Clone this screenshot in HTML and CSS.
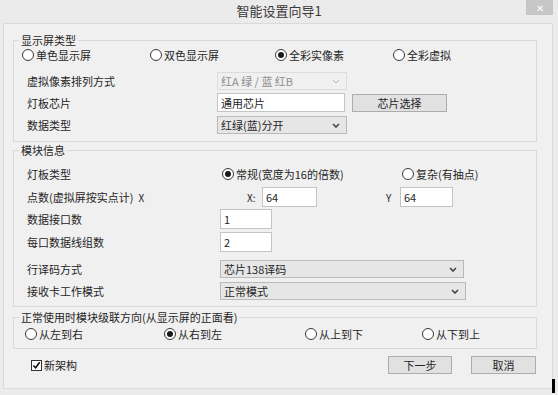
FILE: index.html
```html
<!DOCTYPE html>
<html>
  <head>
    <title>智能设置向导1</title>
    <link rel="stylesheet" href="styles.css">
  </head>
  <body>

	<div class="titlebar">
		<span></span>
		<span class="title">智能设置向导1</span>
		<span class="close">✕</span>
	</div>

	<div class="panel">

		<fieldset class="group g1">
			<legend>显示屏类型</legend>
			<div class="radios">
				<label class="radio"><i></i>单色显示屏</label>
				<label class="radio"><i></i>双色显示屏</label>
				<label class="radio on"><i></i>全彩实像素</label>
				<label class="radio"><i></i>全彩虚拟</label>
			</div>
			<div class="row r-arrange">
				<span class="lbl">虚拟像素排列方式</span>
				<div class="select disabled" style="width: 130px;">红A 绿 / 蓝 红B<svg viewBox="0 0 8 5"><path d="M1 1 L4 4 L7 1"/></svg></div>
			</div>
			<div class="row r-chip">
				<span class="lbl">灯板芯片</span>
				<input class="text" style="width: 128px;" value="通用芯片">
				<button class="btn chipbtn">芯片选择</button>
			</div>
			<div class="row r-data">
				<span class="lbl">数据类型</span>
				<div class="select" style="width: 130px;">红绿(蓝)分开<svg viewBox="0 0 8 5"><path d="M1 1 L4 4 L7 1"/></svg></div>
			</div>
		</fieldset>

		<fieldset class="group g2">
			<legend>模块信息</legend>
			<div class="row r-board">
				<span class="lbl">灯板类型</span>
				<label class="radio on wide"><i></i>常规(宽度为16的倍数)</label>
				<label class="radio"><i></i>复杂(有抽点)</label>
			</div>
			<div class="row r-dots">
				<span class="lbl dots">点数(虚拟屏按实点计)&nbsp;&nbsp;<small>X</small></span>
				<span class="axis"><small>X:</small></span>
				<input class="text" style="width: 55px;" value="64">
				<span class="axis ay"><small>Y</small></span>
				<input class="text" style="width: 53px;" value="64">
			</div>
			<div class="row r-ports">
				<span class="lbl short">数据接口数</span>
				<input class="text" style="width: 52px;" value="1">
			</div>
			<div class="row r-lines">
				<span class="lbl short">每口数据线组数</span>
				<input class="text" style="width: 52px;" value="2">
			</div>
			<div class="row r-decode">
				<span class="lbl short">行译码方式</span>
				<div class="select" style="width: 244px;">芯片138译码<svg viewBox="0 0 8 5"><path d="M1 1 L4 4 L7 1"/></svg></div>
			</div>
			<div class="row r-mode">
				<span class="lbl short">接收卡工作模式</span>
				<div class="select" style="width: 246px;">正常模式<svg viewBox="0 0 8 5"><path d="M1 1 L4 4 L7 1"/></svg></div>
			</div>
		</fieldset>

		<fieldset class="group g3">
			<legend>正常使用时模块级联方向(从显示屏的正面看)</legend>
			<div class="radios">
				<label class="radio"><i></i>从左到右</label>
				<label class="radio on"><i></i>从右到左</label>
				<label class="radio"><i></i>从上到下</label>
				<label class="radio"><i></i>从下到上</label>
			</div>
		</fieldset>

		<div class="footer">
			<label class="check"><i><svg viewBox="0 0 10 10"><path d="M1.5 5 L4 7.5 L8.5 1.5"/></svg></i>新架构</label>
			<div class="buttons">
				<button class="btn">下一步</button>
				<button class="btn">取消</button>
			</div>
		</div>

	</div>

	<div class="cursor"></div>

  </body>
</html>
```

FILE: styles.css
```css
body { margin: 0; width: 558px; height: 395px; background: #ebebeb; font-family: "Noto Sans CJK SC", "Microsoft YaHei", sans-serif; font-size: 11px; color: #262626; position: relative; overflow: hidden; }
small { font-size: 10px; }

.titlebar { display: grid; grid-template-columns: 1fr auto 1fr; height: 23px; }
.titlebar .title { font-size: 13px; line-height: 22px; color: #3a3a3a; }
.titlebar .close { justify-self: end; width: 27px; height: 15px; margin-right: 5px; background: #c6c6c6; color: #fff; font-size: 10px; line-height: 15px; text-align: center; }

.panel { width: 548px; height: 364px; margin-left: 3px; background: #f0f0f0; border: 1px solid #dadada; }

.group { margin: 0 15px 0 9px; padding: 0; border: 1px solid #d9d9d9; border-radius: 0; min-width: 0; }
.group legend { margin-left: 5px; padding: 0 2px; line-height: 14px; }
.g1 { margin-top: 9px; padding-bottom: 7px; }
.g2 { margin-top: 1px; padding-bottom: 6px; }
.g3 { margin-top: 3px; padding-bottom: 7px; }

.radios { display: grid; height: 14px; align-items: center; }
.g1 .radios { grid-template-columns: 128px 125px 118px auto; margin: 1px 0 0 8px; }
.g3 .radios { grid-template-columns: 139px 141px 117px auto; margin: 3px 0 0 11px; }

.radio { display: flex; align-items: center; gap: 2px; line-height: 14px; white-space: nowrap; }
.radio i { box-sizing: border-box; width: 12px; height: 12px; border: 1px solid #3a3a3a; border-radius: 50%; background: #fff; display: flex; align-items: center; justify-content: center; }
.radio.on i::after { content: ""; width: 6px; height: 6px; border-radius: 50%; background: #1a1a1a; }
.radio.wide { width: 180px; }

.row { display: flex; align-items: center; padding-left: 13px; }
.lbl { width: 190px; flex: none; }
.g2 .lbl { width: 195px; }
.g2 .lbl.dots { width: 220px; }
.g2 .lbl.short { width: 193px; }

.r-arrange { margin-top: 10px; height: 18px; }
.r-chip { margin-top: 3px; height: 19px; }
.r-data { margin-top: 4px; height: 18px; }

.r-board { margin-top: 10px; height: 14px; }
.r-dots { margin-top: 6px; height: 20px; }
.r-ports { margin-top: 2px; height: 20px; }
.r-lines { margin-top: 3px; height: 20px; }
.r-decode { margin-top: 8px; height: 18px; }
.r-mode { margin-top: 4px; height: 18px; }

.axis { width: 15px; flex: none; }
.axis.ay { margin-left: 69px; width: 14px; }

.text { box-sizing: border-box; height: 100%; margin: 0; padding: 0 3px; border: 1px solid #c4c4c4; background: #fff; font: inherit; font-size: 11px; color: #262626; outline: none; }

.select { box-sizing: border-box; height: 100%; display: flex; align-items: center; justify-content: space-between; padding: 0 6px 0 3px; border: 1px solid #b9b9b9; background: #e6e6e6; }
.select svg { width: 8px; height: 5px; fill: none; stroke: #444; stroke-width: 1.6; }
.select.disabled { background: #f0f0f0; border-color: #dcdcdc; color: #8d8d8d; }
.select.disabled svg { stroke: #b0b0b0; stroke-width: 1; }

.btn { box-sizing: border-box; height: 18px; margin: 0; padding: 0; border: 1px solid #adadad; background: #e1e1e1; font: inherit; color: #262626; width: 64px; }
.chipbtn { width: 95px; margin-left: 7px; }

.footer { display: flex; justify-content: space-between; align-items: center; height: 18px; margin: 7px 16px 0 27px; }
.check { display: flex; align-items: center; gap: 2px; }
.check i { box-sizing: border-box; width: 11px; height: 11px; border: 1px solid #333; background: #fff; display: flex; }
.check svg { width: 9px; height: 9px; fill: none; stroke: #111; stroke-width: 1.8; }
.buttons { display: flex; gap: 19px; }
.buttons .btn:last-child { width: 65px; }

.cursor { position: absolute; left: 552px; top: 379px; width: 3px; height: 14px; background: #000; }
```
